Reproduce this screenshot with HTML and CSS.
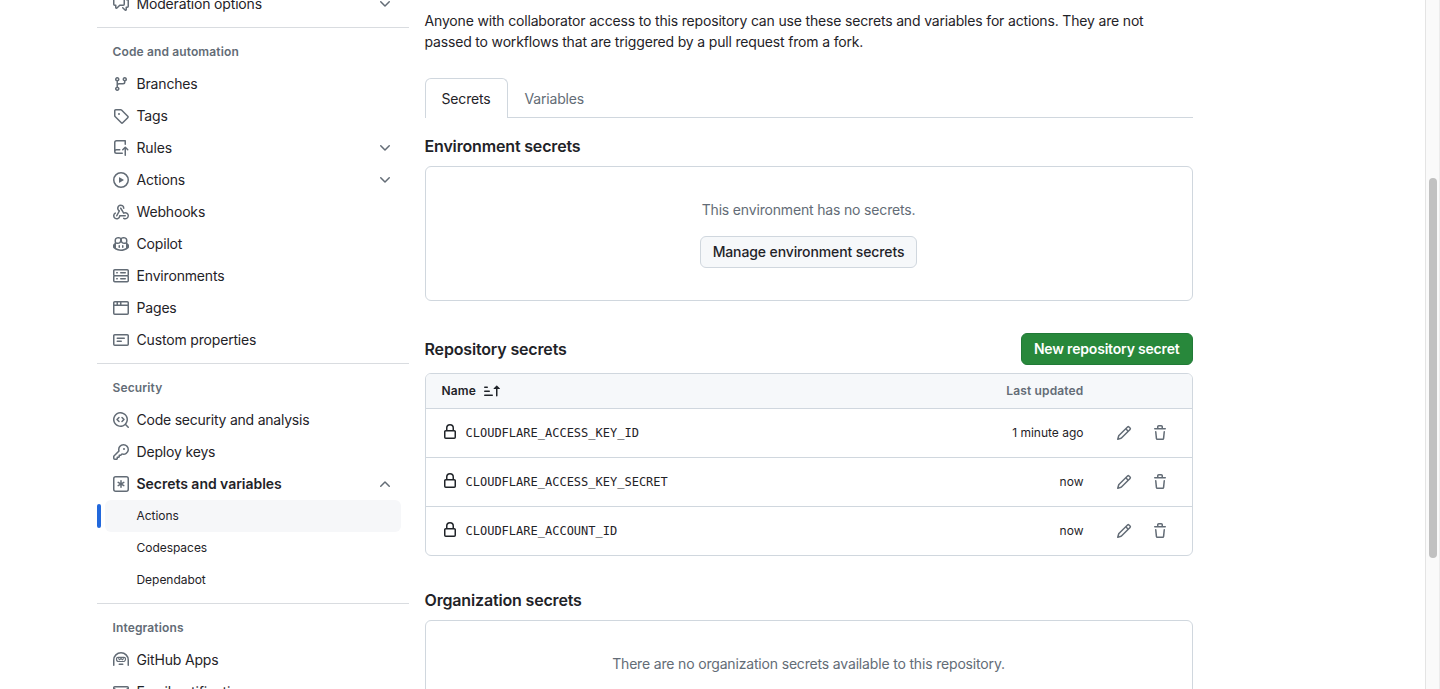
FILE: index.html
```
<!DOCTYPE html>
<html lang="en">
<head>
<meta charset="utf-8">
<title>Actions secrets</title>
<link rel="stylesheet" href="styles.css">
</head>
<body>
<svg class="sprite" aria-hidden="true">
  <symbol id="discussion" viewBox="0 0 16 16"><path d="M1.75 1h8.5c.966 0 1.75.784 1.75 1.75v5.5A1.75 1.75 0 0 1 10.25 10H7.061l-2.574 2.573A1.458 1.458 0 0 1 2 11.543V10h-.25A1.75 1.75 0 0 1 0 8.25v-5.5C0 1.784.784 1 1.75 1ZM1.5 2.75v5.5c0 .138.112.25.25.25h1a.75.75 0 0 1 .75.75v2.19l2.72-2.72a.749.749 0 0 1 .53-.22h3.5a.25.25 0 0 0 .25-.25v-5.5a.25.25 0 0 0-.25-.25h-8.5a.25.25 0 0 0-.25.25Zm13 2a.25.25 0 0 0-.25-.25h-.5a.75.75 0 0 1 0-1.5h.5c.966 0 1.75.784 1.75 1.75v5.5A1.75 1.75 0 0 1 14.25 12H14v1.543a1.458 1.458 0 0 1-2.487 1.03L9.22 12.28a.749.749 0 0 1 .326-1.275.749.749 0 0 1 .734.215l2.22 2.22v-2.19a.75.75 0 0 1 .75-.75h1a.25.25 0 0 0 .25-.25Z"/></symbol>
  <symbol id="branch" viewBox="0 0 16 16"><path d="M9.5 3.25a2.25 2.25 0 1 1 3 2.122V6A2.5 2.5 0 0 1 10 8.5H6a1 1 0 0 0-1 1v1.128a2.251 2.251 0 1 1-1.5 0V5.372a2.25 2.25 0 1 1 1.5 0v1.836A2.493 2.493 0 0 1 6 7h4a1 1 0 0 0 1-1v-.628A2.25 2.25 0 0 1 9.5 3.25Zm-6 0a.75.75 0 1 0 1.5 0 .75.75 0 0 0-1.5 0Zm8.25-.75a.75.75 0 1 0 0 1.5.75.75 0 0 0 0-1.5ZM4.25 12a.75.75 0 1 0 0 1.5.75.75 0 0 0 0-1.5Z"/></symbol>
  <symbol id="tag" viewBox="0 0 16 16"><path d="M1 7.775V2.75C1 1.784 1.784 1 2.75 1h5.025c.464 0 .91.184 1.238.513l6.25 6.25a1.75 1.75 0 0 1 0 2.474l-5.026 5.026a1.75 1.75 0 0 1-2.474 0l-6.25-6.25A1.752 1.752 0 0 1 1 7.775Zm1.5 0c0 .066.026.13.073.177l6.25 6.25a.25.25 0 0 0 .354 0l5.025-5.025a.25.25 0 0 0 0-.354l-6.25-6.25a.25.25 0 0 0-.177-.073H2.75a.25.25 0 0 0-.25.25ZM6 5a1 1 0 1 1 0 2 1 1 0 0 1 0-2Z"/></symbol>
  <symbol id="repo-push" viewBox="0 0 16 16"><path d="M1 2.5A2.5 2.5 0 0 1 3.5 0h8.75a.75.75 0 0 1 .75.75v3.5a.75.75 0 0 1-1.5 0V1.5h-8a1 1 0 0 0-1 1v6.708A2.493 2.493 0 0 1 3.5 9h3.25a.75.75 0 0 1 0 1.5H3.5a1 1 0 0 0 0 2h5.75a.75.75 0 0 1 0 1.5H3.5A2.5 2.5 0 0 1 1 11.5Zm13.23 7.79h-.001l-1.224-1.224v6.184a.75.75 0 0 1-1.5 0V9.066L10.28 10.29a.75.75 0 0 1-1.06-1.061l2.505-2.504a.75.75 0 0 1 1.06 0L15.29 9.23a.751.751 0 0 1-.018 1.042.751.751 0 0 1-1.042.018Z"/></symbol>
  <symbol id="play" viewBox="0 0 16 16"><path d="M8 0a8 8 0 1 1 0 16A8 8 0 0 1 8 0ZM1.5 8a6.5 6.5 0 1 0 13 0 6.5 6.5 0 0 0-13 0Zm4.879-2.773 4.264 2.559a.25.25 0 0 1 0 .428l-4.264 2.559A.25.25 0 0 1 6 10.559V5.442a.25.25 0 0 1 .379-.215Z"/></symbol>
  <symbol id="webhook" viewBox="0 0 16 16"><path d="M5.5 4.25a2.25 2.25 0 0 1 4.5 0 .75.75 0 0 0 1.5 0 3.75 3.75 0 1 0-6.14 2.889l-2.272 4.258a.75.75 0 0 0 1.324.706L7 7.25a.75.75 0 0 0-.309-1.015A2.25 2.25 0 0 1 5.5 4.25Z"/><path d="M7.364 3.607a.75.75 0 0 1 1.03.257l2.608 4.349a3.75 3.75 0 1 1-.628 6.785.75.75 0 0 1 .752-1.299 2.25 2.25 0 1 0-.033-3.88.75.75 0 0 1-1.03-.256L7.107 4.636a.75.75 0 0 1 .257-1.03Z"/><path d="M2.9 8.776A.75.75 0 0 1 2.625 9.8 2.25 2.25 0 1 0 6 11.75a.75.75 0 0 1 .75-.751h5.5a.75.75 0 0 1 0 1.5H7.425a3.751 3.751 0 1 1-5.55-3.998.75.75 0 0 1 1.024.274Z"/></symbol>
  <symbol id="copilot" viewBox="0 0 16 16"><path d="M7.998 15.035c-4.562 0-7.873-2.914-7.998-3.749V9.338c.085-.628.677-1.686 1.588-2.065.013-.07.024-.143.036-.218.029-.183.06-.384.126-.612-.201-.508-.254-1.084-.254-1.656 0-.87.128-1.769.693-2.484.579-.733 1.494-1.124 2.724-1.261 1.206-.134 2.262.034 2.944.765.05.053.096.108.139.165.044-.057.094-.112.143-.165.682-.731 1.738-.899 2.944-.765 1.23.137 2.145.528 2.724 1.261.566.715.693 1.614.693 2.484 0 .572-.053 1.148-.254 1.656.066.228.098.429.126.612.012.076.024.148.037.218.924.385 1.522 1.471 1.591 2.095v1.872c0 .766-3.351 3.795-8.002 3.795Zm0-1.485c2.28 0 4.584-1.11 5.002-1.433V7.862l-.023-.116c-.49.21-1.075.291-1.727.291-1.146 0-2.059-.327-2.71-.991A3.222 3.222 0 0 1 8 6.303a3.24 3.24 0 0 1-.544.743c-.65.664-1.563.991-2.71.991-.652 0-1.236-.081-1.727-.291l-.023.116v4.255c.419.323 2.722 1.433 5.002 1.433ZM6.762 2.83c-.193-.206-.637-.413-1.682-.297-1.019.113-1.479.404-1.713.7-.247.312-.369.789-.369 1.554 0 .793.129 1.171.308 1.371.162.181.519.379 1.442.379.853 0 1.339-.235 1.638-.54.315-.322.527-.827.617-1.553.117-.935-.037-1.395-.241-1.614Zm4.155-.297c-1.044-.116-1.488.091-1.681.297-.204.219-.359.679-.242 1.614.091.726.303 1.231.618 1.553.299.305.784.54 1.638.54.922 0 1.28-.198 1.442-.379.179-.2.308-.578.308-1.371 0-.765-.123-1.242-.37-1.554-.233-.296-.693-.587-1.713-.7Z"/><path d="M6.25 9.037a.75.75 0 0 1 .75.75v1.501a.75.75 0 0 1-1.5 0V9.787a.75.75 0 0 1 .75-.75Zm4.25.75v1.501a.75.75 0 0 1-1.5 0V9.787a.75.75 0 0 1 1.5 0Z"/></symbol>
  <symbol id="server" viewBox="0 0 16 16"><path d="M1.75 1h12.5c.966 0 1.75.784 1.75 1.75v4c0 .372-.116.717-.314 1 .198.283.314.628.314 1v4a1.75 1.75 0 0 1-1.75 1.75H1.75A1.75 1.75 0 0 1 0 12.75v-4c0-.358.109-.707.314-1a1.739 1.739 0 0 1-.314-1v-4C0 1.784.784 1 1.75 1ZM1.5 2.75v4c0 .138.112.25.25.25h12.5a.25.25 0 0 0 .25-.25v-4a.25.25 0 0 0-.25-.25H1.75a.25.25 0 0 0-.25.25Zm.25 5.75a.25.25 0 0 0-.25.25v4c0 .138.112.25.25.25h12.5a.25.25 0 0 0 .25-.25v-4a.25.25 0 0 0-.25-.25ZM7 4.75A.75.75 0 0 1 7.75 4h4.5a.75.75 0 0 1 0 1.5h-4.5A.75.75 0 0 1 7 4.75ZM7.75 10h4.5a.75.75 0 0 1 0 1.5h-4.5a.75.75 0 0 1 0-1.5ZM3 4.75A.75.75 0 0 1 3.75 4h.5a.75.75 0 0 1 0 1.5h-.5A.75.75 0 0 1 3 4.75ZM3.75 10h.5a.75.75 0 0 1 0 1.5h-.5a.75.75 0 0 1 0-1.5Z"/></symbol>
  <symbol id="browser" viewBox="0 0 16 16"><path d="M0 2.75C0 1.784.784 1 1.75 1h12.5c.966 0 1.75.784 1.75 1.75v10.5A1.75 1.75 0 0 1 14.25 15H1.75A1.75 1.75 0 0 1 0 13.25ZM14.5 6h-13v7.25c0 .138.112.25.25.25h12.5a.25.25 0 0 0 .25-.25Zm-6-3.5v2h6V2.75a.25.25 0 0 0-.25-.25ZM5 2.5v2h2v-2Zm-3.25 0a.25.25 0 0 0-.25.25V4.5h2v-2Z"/></symbol>
  <symbol id="note" viewBox="0 0 16 16"><path d="M0 3.75C0 2.784.784 2 1.75 2h12.5c.966 0 1.75.784 1.75 1.75v8.5A1.75 1.75 0 0 1 14.25 14H1.75A1.75 1.75 0 0 1 0 12.25Zm1.75-.25a.25.25 0 0 0-.25.25v8.5c0 .138.112.25.25.25h12.5a.25.25 0 0 0 .25-.25v-8.5a.25.25 0 0 0-.25-.25ZM3.5 6.25a.75.75 0 0 1 .75-.75h7a.75.75 0 0 1 0 1.5h-7a.75.75 0 0 1-.75-.75Zm.75 2.25h4a.75.75 0 0 1 0 1.5h-4a.75.75 0 0 1 0-1.5Z"/></symbol>
  <symbol id="codescan" viewBox="0 0 16 16"><path d="M8.47 4.97a.75.75 0 0 0 0 1.06L9.94 7.5 8.47 8.97a.75.75 0 1 0 1.06 1.06l2-2a.75.75 0 0 0 0-1.06l-2-2a.75.75 0 0 0-1.06 0ZM6.53 6.03a.75.75 0 0 0-1.06-1.06l-2 2a.75.75 0 0 0 0 1.06l2 2a.75.75 0 1 0 1.06-1.06L5.06 7.5l1.47-1.47Z"/><path d="M12.246 13.307a7.501 7.501 0 1 1 1.06-1.06l2.474 2.473a.749.749 0 0 1-.326 1.275.749.749 0 0 1-.734-.215ZM1.5 7.5a6.002 6.002 0 0 0 3.608 5.504 6.002 6.002 0 0 0 6.486-1.117.748.748 0 0 1 .292-.293A6 6 0 1 0 1.5 7.5Z"/></symbol>
  <symbol id="key" viewBox="0 0 16 16"><path d="M10.5 0a5.499 5.499 0 1 1-1.288 10.848l-.932.932a.749.749 0 0 1-.53.22H7v.75a.749.749 0 0 1-.22.53l-.5.5a.749.749 0 0 1-.53.22H5v.75a.749.749 0 0 1-.22.53l-.5.5a.749.749 0 0 1-.53.22h-2A1.75 1.75 0 0 1 0 14.25v-2c0-.199.079-.389.22-.53l4.932-4.932A5.5 5.5 0 0 1 10.5 0Zm-4 5.5c-.001.431.069.86.205 1.269a.75.75 0 0 1-.181.768L1.5 12.56v1.69c0 .138.112.25.25.25h1.69l.06-.06v-1.19a.75.75 0 0 1 .75-.75h1.19l.06-.06v-1.19a.75.75 0 0 1 .75-.75h1.19l1.023-1.025a.75.75 0 0 1 .768-.18A4 4 0 1 0 6.5 5.5ZM11 6a1 1 0 1 1 0-2 1 1 0 0 1 0 2Z"/></symbol>
  <symbol id="asterisk" viewBox="0 0 16 16"><path d="M0 2.75A2.75 2.75 0 0 1 2.75 0h10.5A2.75 2.75 0 0 1 16 2.75v10.5A2.75 2.75 0 0 1 13.25 16H2.75A2.75 2.75 0 0 1 0 13.25ZM2.75 1.5c-.69 0-1.25.56-1.25 1.25v10.5c0 .69.56 1.25 1.25 1.25h10.5c.69 0 1.25-.56 1.25-1.25V2.75c0-.69-.56-1.25-1.25-1.25Z"/><path d="M8 4a.75.75 0 0 1 .75.75V6.7l1.69-.975a.75.75 0 0 1 .75 1.3L9.5 8l1.69.976a.75.75 0 0 1-.75 1.298L8.75 9.3v1.951a.75.75 0 0 1-1.5 0V9.299l-1.69.976a.75.75 0 0 1-.75-1.3L6.5 8l-1.69-.975a.75.75 0 0 1 .75-1.3l1.69.976V4.75A.75.75 0 0 1 8 4Z"/></symbol>
  <symbol id="hubot" viewBox="0 0 16 16"><path d="M0 8a8 8 0 1 1 16 0v5.25a.75.75 0 0 1-1.5 0V8a6.5 6.5 0 1 0-13 0v5.25a.75.75 0 0 1-1.5 0V8Zm5.5 4.25a.75.75 0 0 1 .75-.75h3.5a.75.75 0 0 1 0 1.5h-3.5a.75.75 0 0 1-.75-.75Z"/><path class="line" d="M5 5.3h6a1.5 1.5 0 0 1 1.5 1.5v.4A2.3 2.3 0 0 1 10.200 9.500H5.800A2.300 2.300 0 0 1 3.500 7.200v-.4A1.500 1.500 0 0 1 5 5.300Z"/><path class="line" d="M5.200 6.400 6.600 7.600 8 6.500l1.400 1.100 1.400-1.200"/></symbol>
  <symbol id="mail" viewBox="0 0 16 16"><path d="M1.75 2h12.5c.966 0 1.75.784 1.75 1.75v8.5A1.75 1.75 0 0 1 14.25 14H1.75A1.75 1.75 0 0 1 0 12.25v-8.5C0 2.784.784 2 1.75 2ZM1.5 12.251c0 .138.112.25.25.25h12.5a.25.25 0 0 0 .25-.25V5.809L8.38 9.397a.75.75 0 0 1-.76 0L1.5 5.809v6.442Zm13-8.181v-.32a.25.25 0 0 0-.25-.25H1.75a.25.25 0 0 0-.25.25v.32L8 7.88Z"/></symbol>
  <symbol id="chevron" viewBox="0 0 16 16"><path d="M12.78 5.22a.749.749 0 0 1 0 1.06l-4.25 4.25a.749.749 0 0 1-1.06 0L3.22 6.28a.749.749 0 1 1 1.06-1.06L8 8.939l3.72-3.719a.749.749 0 0 1 1.06 0Z"/></symbol>
  <symbol id="lock" viewBox="0 0 16 16"><path d="M4 4a4 4 0 0 1 8 0v2h.25c.966 0 1.75.784 1.75 1.75v5.5A1.75 1.75 0 0 1 12.25 15h-8.5A1.75 1.75 0 0 1 2 13.25v-5.5C2 6.784 2.784 6 3.75 6H4Zm8.25 3.5h-8.5a.25.25 0 0 0-.25.25v5.5c0 .138.112.25.25.25h8.5a.25.25 0 0 0 .25-.25v-5.5a.25.25 0 0 0-.25-.25ZM10.5 6V4a2.5 2.5 0 1 0-5 0v2Z"/></symbol>
  <symbol id="pencil" viewBox="0 0 16 16"><path d="M11.013 1.427a1.75 1.75 0 0 1 2.474 0l1.086 1.086a1.75 1.75 0 0 1 0 2.474l-8.61 8.61c-.21.21-.47.364-.756.445l-3.251.93a.75.75 0 0 1-.927-.928l.929-3.25c.081-.286.235-.547.445-.758l8.61-8.61Zm.176 4.823L9.75 4.81l-6.286 6.287a.253.253 0 0 0-.064.108l-.558 1.953 1.953-.558a.253.253 0 0 0 .108-.064Zm1.238-3.763a.25.25 0 0 0-.354 0L10.811 3.75l1.439 1.44 1.263-1.263a.25.25 0 0 0 0-.354Z"/></symbol>
  <symbol id="trash" viewBox="0 0 16 16"><path d="M11 1.75V3h2.25a.75.75 0 0 1 0 1.5H2.75a.75.75 0 0 1 0-1.5H5V1.75C5 .784 5.784 0 6.75 0h2.5C10.216 0 11 .784 11 1.75ZM4.496 6.675l.66 6.6a.25.25 0 0 0 .249.225h5.19a.25.25 0 0 0 .249-.225l.66-6.6a.75.75 0 0 1 1.492.149l-.66 6.6A1.748 1.748 0 0 1 10.595 15h-5.19a1.75 1.75 0 0 1-1.741-1.575l-.66-6.6a.75.75 0 1 1 1.492-.15ZM6.5 1.75V3h3V1.75a.25.25 0 0 0-.25-.25h-2.5a.25.25 0 0 0-.25.25Z"/></symbol>
  <symbol id="sort" viewBox="0 0 16 16"><path d="m12.927 2.573 3 3A.25.25 0 0 1 15.75 6H13.5v6.75a.75.75 0 0 1-1.5 0V6H9.75a.25.25 0 0 1-.177-.427l3-3a.25.25 0 0 1 .354 0ZM0 12.25a.75.75 0 0 1 .75-.75h7.5a.75.75 0 0 1 0 1.5H.75a.75.75 0 0 1-.75-.75Zm0-4a.75.75 0 0 1 .75-.75h4.5a.75.75 0 0 1 0 1.5H.75a.75.75 0 0 1-.75-.75Zm0-4a.75.75 0 0 1 .75-.75h2.5a.75.75 0 0 1 0 1.5H.75a.75.75 0 0 1-.75-.75Z"/></symbol>
</svg>

<div class="window">
  <div class="page">
    <nav class="sidebar">
      <div class="nav-group nav-group-first">
        <a class="nav-item"><svg class="icon"><use href="#discussion"/></svg><span class="label">Moderation options</span><svg class="icon"><use href="#chevron"/></svg></a>
      </div>
      <div class="nav-group">
        <h3 class="nav-title">Code and automation</h3>
        <a class="nav-item"><svg class="icon"><use href="#branch"/></svg><span class="label">Branches</span></a>
        <a class="nav-item"><svg class="icon"><use href="#tag"/></svg><span class="label">Tags</span></a>
        <a class="nav-item"><svg class="icon"><use href="#repo-push"/></svg><span class="label">Rules</span><svg class="icon"><use href="#chevron"/></svg></a>
        <a class="nav-item"><svg class="icon"><use href="#play"/></svg><span class="label">Actions</span><svg class="icon"><use href="#chevron"/></svg></a>
        <a class="nav-item"><svg class="icon"><use href="#webhook"/></svg><span class="label">Webhooks</span></a>
        <a class="nav-item"><svg class="icon"><use href="#copilot"/></svg><span class="label">Copilot</span></a>
        <a class="nav-item"><svg class="icon"><use href="#server"/></svg><span class="label">Environments</span></a>
        <a class="nav-item"><svg class="icon"><use href="#browser"/></svg><span class="label">Pages</span></a>
        <a class="nav-item"><svg class="icon"><use href="#note"/></svg><span class="label">Custom properties</span></a>
      </div>
      <div class="nav-group">
        <h3 class="nav-title">Security</h3>
        <a class="nav-item"><svg class="icon"><use href="#codescan"/></svg><span class="label label-tight">Code security and analysis</span></a>
        <a class="nav-item"><svg class="icon"><use href="#key"/></svg><span class="label">Deploy keys</span></a>
        <a class="nav-item nav-item-open"><svg class="icon"><use href="#asterisk"/></svg><span class="label">Secrets and variables</span><svg class="icon icon-up"><use href="#chevron"/></svg></a>
        <a class="nav-sub nav-sub-active">Actions</a>
        <a class="nav-sub">Codespaces</a>
        <a class="nav-sub">Dependabot</a>
      </div>
      <div class="nav-group">
        <h3 class="nav-title">Integrations</h3>
        <a class="nav-item"><svg class="icon"><use href="#hubot"/></svg><span class="label">GitHub Apps</span></a>
        <a class="nav-item"><svg class="icon"><use href="#mail"/></svg><span class="label">Email notifications</span></a>
      </div>
    </nav>

    <main class="content">
      <p class="intro">Anyone with collaborator access to this repository can use these secrets and variables for actions. They are not<br>passed to workflows that are triggered by a pull request from a fork.</p>
      <div class="tabs">
        <a class="tab tab-active">Secrets</a>
        <a class="tab">Variables</a>
      </div>

      <section class="section">
        <div class="section-head section-head-tight"><h2 class="heading">Environment secrets</h2></div>
        <div class="blank">
          <p class="blank-text">This environment has no secrets.</p>
          <button class="btn">Manage environment secrets</button>
        </div>
      </section>

      <section class="section">
        <div class="section-head"><h2 class="heading">Repository secrets</h2><button class="btn btn-primary">New repository secret</button></div>
        <div class="table">
          <div class="row row-head"><span class="col-name">Name <svg class="icon"><use href="#sort"/></svg></span><span class="col-updated">Last updated</span></div>
          <div class="row"><svg class="icon icon-lock"><use href="#lock"/></svg><code class="secret">CLOUDFLARE_ACCESS_KEY_ID</code><span class="time">1 minute ago</span><svg class="icon"><use href="#pencil"/></svg><svg class="icon icon-trash"><use href="#trash"/></svg></div>
          <div class="row"><svg class="icon icon-lock"><use href="#lock"/></svg><code class="secret">CLOUDFLARE_ACCESS_KEY_SECRET</code><span class="time">now</span><svg class="icon"><use href="#pencil"/></svg><svg class="icon icon-trash"><use href="#trash"/></svg></div>
          <div class="row"><svg class="icon icon-lock"><use href="#lock"/></svg><code class="secret">CLOUDFLARE_ACCOUNT_ID</code><span class="time">now</span><svg class="icon"><use href="#pencil"/></svg><svg class="icon icon-trash"><use href="#trash"/></svg></div>
        </div>
      </section>

      <section class="section">
        <div class="section-head"><h2 class="heading">Organization secrets</h2></div>
        <div class="blank"><p class="blank-text">There are no organization secrets available to this repository.</p></div>
      </section>
    </main>
  </div>
  <div class="scrollbar"><div class="thumb"></div></div>
</div>
</body>
</html>
```
FILE: styles.css
```
* { box-sizing: border-box; }

body {
  margin: 0;
  background: #fff;
  color: #1f2328;
  font-family: Inter, "Liberation Sans", sans-serif;
  font-size: 14px;
  line-height: 21px;
  letter-spacing: -0.17px;
}

.sprite { display: none; }

.window {
  display: flex;
  height: 689px;
  overflow: hidden;
}

.page {
  flex: 1;
  display: flex;
  align-items: flex-start;
  gap: 16px;
  padding-left: 96.5px;
}

.icon {
  flex: none;
  width: 16px;
  height: 16px;
  fill: #636c76;
}

.icon-up { transform: rotate(180deg); }

.line {
  fill: none;
  stroke: #636c76;
  stroke-width: 1.2;
}

/* Sidebar */
.sidebar {
  width: 312px;
  margin-top: -12px;
}

.nav-group {
  margin-top: 7px;
  border-top: 1px solid #d9dce0;
}

.nav-group-first {
  margin-top: 0;
  border-top: 0;
}

.nav-title {
  height: 40px;
  margin: 0;
  padding: 15px 16px 0;
  color: #636c76;
  font-size: 12px;
  font-weight: 600;
  line-height: 18px;
  letter-spacing: 0.13px;
}

.nav-item {
  display: flex;
  align-items: center;
  gap: 8px;
  height: 32px;
  padding: 0 16px;
  line-height: 20px;
}

.label { flex: 1; }

.label-tight { letter-spacing: -0.23px; }

.nav-item-open {
  font-weight: 600;
  letter-spacing: -0.03px;
}

.nav-sub {
  display: flex;
  align-items: center;
  height: 32px;
  margin: 0 8px;
  padding-left: 32px;
  border-radius: 6px;
  font-size: 12px;
  line-height: 18px;
  letter-spacing: -0.04px;
}

.nav-sub-active {
  position: relative;
  background: #f6f7f9;
}

.nav-sub-active::before {
  content: "";
  position: absolute;
  top: 4px;
  left: -8px;
  width: 4px;
  height: 24px;
  border-radius: 6px;
  background: #2268dc;
}

/* Content */
.content {
  width: 768px;
  padding-top: 10px;
}

.intro {
  margin: 0 0 26px;
  white-space: nowrap;
}

.tabs {
  display: flex;
  height: 40px;
  box-shadow: inset 0 -1px 0 #d0d7de;
}

.tab {
  padding: 9px 16px;
  border: 1px solid transparent;
  border-bottom: 0;
  color: #636c76;
}

.tab-active {
  border-color: #d0d7de;
  border-radius: 6px 6px 0 0;
  background: #fff;
  color: #1f2328;
}

.section-head {
  display: flex;
  align-items: center;
  justify-content: space-between;
  margin: 32px 0 8px;
}

.section-head-tight { margin-top: 16px; }

.heading {
  margin: 0;
  font-size: 16px;
  font-weight: 600;
  line-height: 24px;
  letter-spacing: -0.16px;
}

.blank {
  display: flex;
  flex-direction: column;
  align-items: center;
  gap: 16px;
  padding: 32px;
  border: 1px solid #d0d7de;
  border-radius: 6px;
}

.blank-text {
  margin: 0;
  color: #636c76;
}

.btn {
  height: 32px;
  padding: 0 12px;
  border: 1px solid #d0d7de;
  border-radius: 6px;
  background: #f6f8fa;
  color: #1f2328;
  font: 500 14px/20px Inter, "Liberation Sans", sans-serif;
  letter-spacing: -0.115px;
}

.btn-primary {
  border-color: #217a37;
  background: #28883b;
  color: #fff;
  font-weight: 600;
  letter-spacing: -0.19px;
}

.table {
  overflow: hidden;
  border: 1px solid #d0d7de;
  border-radius: 6px;
}

.row {
  display: flex;
  align-items: center;
  height: 49px;
  padding: 0 24px 0 16px;
  border-top: 1px solid #d0d7de;
  font-size: 12px;
  letter-spacing: 0;
}

.row-head {
  height: 34px;
  padding-bottom: 1px;
  border-top: 0;
  background: #f6f8fa;
  font-weight: 600;
  line-height: 18px;
  letter-spacing: 0.14px;
}

.row-head .icon { fill: #1f2328; }

.col-name {
  flex: 1;
  display: flex;
  align-items: center;
  gap: 8px;
}

.col-updated {
  margin-right: 84px;
  color: #636c76;
}

.icon-lock {
  margin: 0 8px 2px 0;
  fill: #1f2328;
}

.secret {
  flex: 1;
  font: 12px/18px "DejaVu Sans Mono", monospace;
}

.time {
  margin: 0 32px 1px 0;
  line-height: 18px;
}

.icon-trash { margin-left: 20px; }

/* Scrollbar */
.scrollbar {
  width: 15px;
  padding: 178px 2px 0 3px;
  border-left: 1px solid #e4e4e4;
  border-right: 1px solid #ececec;
  background: #fafafa;
}

.thumb {
  width: 8px;
  height: 380px;
  border-radius: 4px;
  background: #c1c1c1;
}
```
